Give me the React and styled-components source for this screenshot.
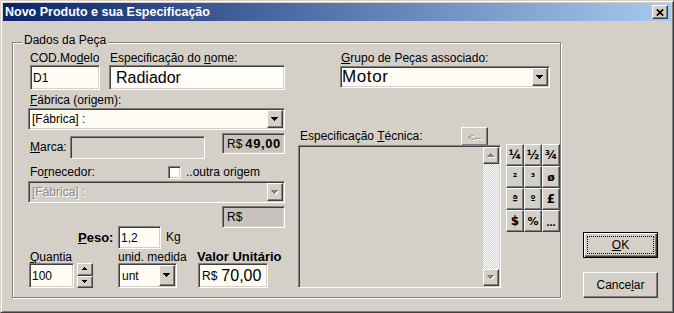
import React from 'react';
import styled, { createGlobalStyle, css } from 'styled-components';

const GlobalStyle = createGlobalStyle`
  html, body {
    margin: 0;
    padding: 0;
    background: #d4d0c8;
  }

  body {
    font-family: "Liberation Sans", Arial, sans-serif;
    font-size: 12px;
    color: #000;
  }

  u {
    text-decoration-thickness: 1px;
    text-underline-offset: 1px;
  }
`;

// bordas 3D do tema clássico
const raised = css`
  border: 1px solid;
  border-color: #fff #404040 #404040 #fff;
  box-shadow: inset -1px -1px 0 #808080;
  background: #d4d0c8;
`;

const sunken = css`
  border: 1px solid;
  border-color: #808080 #fff #fff #808080;
  box-shadow: inset 1px 1px 0 #404040, inset -1px -1px 0 #d4d0c8;
`;

const tones = {
  edit: '#fffcf4',
  white: '#fffefb',
  disabled: '#d4d0c8',
  price: '#c6c3be',
};

const Window = styled.div`
  box-sizing: border-box;
  width: 674px;
  height: 313px;
  padding: 2px;
  border: 1px solid;
  border-color: #d4d0c8 #404040 #404040 #d4d0c8;
  box-shadow: inset 1px 1px 0 #fff, inset -1px -1px 0 #808080;
  background: #d4d0c8;
  display: flex;
  flex-direction: column;
  overflow: hidden;
`;

const TitleBar = styled.div`
  height: 18px;
  display: flex;
  align-items: center;
  padding: 0 3px 0 2px;
  background: linear-gradient(to right, #0a246a, #a6caf0);
`;

const TitleText = styled.span`
  flex: 1;
  color: #fff;
  font-size: 12.5px;
  font-weight: 700;
  white-space: nowrap;
`;

const CloseButton = styled.button`
  ${raised};
  box-sizing: border-box;
  width: 16px;
  height: 14px;
  padding: 0;
  display: flex;
  align-items: center;
  justify-content: center;
`;

const Body = styled.div`
  display: flex;
  align-items: flex-start;
  padding: 21px 0 0 9px;
`;

const GroupBox = styled.section`
  box-sizing: border-box;
  width: 549px;
  height: 256px;
  border: 1px solid #808080;
  box-shadow: inset 1px 1px 0 #fff, 1px 1px 0 #fff;
  display: flex;
  flex-direction: column;
`;

const GroupTitle = styled.h2`
  align-self: flex-start;
  margin: -10px 0 0 9px;
  padding: 0 2px;
  background: #d4d0c8;
  font-size: 12px;
  font-weight: 400;
  line-height: 14px;
`;

const Columns = styled.div`
  display: flex;
  padding-top: 5px;
`;

const LeftCol = styled.div`
  width: 257px;
  margin-left: 15px;
  display: flex;
  flex-direction: column;
`;

const RightCol = styled.div`
  width: 263px;
  margin-left: 12px;
  display: flex;
  flex-direction: column;
`;

const TopGrid = styled.div`
  display: grid;
  grid-template-columns: 81px auto;
`;

const BottomGrid = styled.div`
  display: grid;
  grid-template-columns: 89px 79px auto;
  margin-top: 2px;
  padding-left: 1px;
`;

const Stack = styled.div`
  display: flex;
  flex-direction: column;
  align-items: flex-start;
  margin-left: ${p => p.$x || 0}px;
  margin-top: ${p => p.$mt || 0}px;
  gap: ${p => p.$gap || 0}px;
`;

const Row = styled.div`
  display: flex;
  align-items: ${p => p.$align || 'center'};
  margin-top: ${p => p.$mt || 0}px;
  padding-left: ${p => p.$pl || 0}px;
  height: ${p => (p.$h ? `${p.$h}px` : 'auto')};
`;

const Caption = styled.label`
  display: block;
  flex: none;
  width: ${p => (p.$w ? `${p.$w}px` : 'auto')};
  padding-left: ${p => p.$indent || 0}px;
  font-size: ${p => (p.$bold ? 13 : 12)}px;
  font-weight: ${p => (p.$bold ? 700 : 400)};
  line-height: ${p => p.$lh || 13}px;
  text-align: ${p => p.$align || 'left'};
  white-space: nowrap;
`;

const Field = styled.div`
  ${sunken};
  box-sizing: border-box;
  flex: none;
  width: ${p => p.$w}px;
  height: ${p => p.$h}px;
  margin-left: ${p => p.$x || 0}px;
  padding-left: ${p => p.$pad ?? 2}px;
  display: flex;
  align-items: center;
  gap: 4px;
  background: ${p => tones[p.$tone || 'edit']};
  font-size: ${p => p.$size || 12}px;
  white-space: nowrap;
  overflow: hidden;
`;

const PriceField = styled(Field)`
  margin-left: auto;
  gap: 3px;
`;

const PriceBox = styled(Field)`
  align-self: flex-end;
`;

const Amount = styled.span`
  font-size: ${p => p.$size}px;
  font-weight: ${p => (p.$bold ? 700 : 400)};
  letter-spacing: ${p => (p.$bold ? 0.6 : 0)}px;
`;

const Combo = styled.div`
  ${sunken};
  box-sizing: border-box;
  flex: none;
  width: ${p => p.$w}px;
  height: ${p => p.$h || 22}px;
  margin-top: ${p => p.$mt || 0}px;
  padding: 1px;
  display: flex;
  background: ${p => (p.$disabled ? '#d4d0c8' : '#fffcf4')};
`;

const ComboValue = styled.span`
  flex: 1;
  display: flex;
  align-items: center;
  padding-left: ${p => p.$pad ?? 2}px;
  font-size: ${p => p.$size || 12}px;
  letter-spacing: ${p => p.$ls || 0}px;
  color: ${p => (p.$disabled ? '#8a8a8a' : '#000')};
  text-shadow: ${p => (p.$disabled ? '1px 1px 0 #fff' : 'none')};
  white-space: nowrap;
  overflow: hidden;
`;

const DropButton = styled.span`
  ${raised};
  box-sizing: border-box;
  width: 16px;
  display: flex;
  align-items: center;
  justify-content: center;
`;

const CheckBox = styled.span`
  ${sunken};
  box-sizing: border-box;
  width: 13px;
  height: 13px;
  background: #fff;
  flex: none;
`;

const Spinner = styled.div`
  display: flex;
  flex-direction: column;
  width: 16px;
  height: 25px;
  margin-left: 3px;
`;

const SpinButton = styled.span`
  ${raised};
  box-sizing: border-box;
  flex: 1;
  display: flex;
  align-items: center;
  justify-content: center;
`;

const SpecRow = styled.div`
  display: flex;
  align-items: flex-start;
  margin-top: 39px;
`;

const SpecBlock = styled.div`
  width: 203px;
  margin-left: 1px;
  display: flex;
  flex-direction: column;
`;

const SpecHeader = styled.div`
  height: 19px;
  display: flex;
  align-items: center;
`;

const SmallButton = styled.button`
  ${raised};
  box-sizing: border-box;
  width: 27px;
  height: 19px;
  margin: 0 13px 0 auto;
  padding: 0;
  font: 11px "Liberation Sans", Arial, sans-serif;
  color: #8a8a8a;
  text-shadow: 1px 1px 0 #fff;
`;

const TextArea = styled.div`
  ${sunken};
  box-sizing: border-box;
  height: 143px;
  margin-top: -1px;
  padding: 1px;
  display: flex;
  justify-content: flex-end;
  background: #d4d0c8;
`;

const ScrollBar = styled.div`
  width: 16px;
  display: flex;
  flex-direction: column;
`;

const ScrollArrow = styled.span`
  ${raised};
  box-sizing: border-box;
  height: 17px;
  display: flex;
  align-items: center;
  justify-content: center;
`;

const ScrollTrack = styled.span`
  flex: 1;
  background: repeating-conic-gradient(#fff 0 25%, #d4d0c8 0 50%) 0 0 / 2px 2px;
`;

const Keypad = styled.div`
  display: grid;
  grid-template-columns: repeat(3, 18px);
  grid-auto-rows: 22px;
  margin: 17px 0 0 5px;
`;

const Key = styled.button`
  ${raised};
  box-sizing: border-box;
  padding: 0;
  font: bold ${p => p.$size || 11}px "DejaVu Sans", "Liberation Sans", sans-serif;
  color: #000;
  display: flex;
  align-items: ${p => (p.$low ? 'flex-end' : 'center')};
  justify-content: center;
  padding-bottom: ${p => (p.$low ? 3 : 0)}px;
`;

const SideCol = styled.div`
  height: 256px;
  margin-left: 22px;
  display: flex;
  flex-direction: column;
  justify-content: flex-end;
  gap: 14px;
`;

const PushButton = styled.button`
  ${raised};
  box-sizing: border-box;
  width: 75px;
  height: 26px;
  padding: 3px;
  display: flex;
  font: 12px "Liberation Sans", Arial, sans-serif;
  color: #000;

  ${p =>
    p.$default &&
    css`
      border: 1px solid #000;
      box-shadow: inset 1px 1px 0 #fff, inset -1px -1px 0 #404040,
        inset -2px -2px 0 #808080;
    `}
`;

const ButtonFace = styled.span`
  flex: 1;
  display: flex;
  align-items: center;
  justify-content: center;
  border: 1px dotted ${p => (p.$focus ? '#000' : 'transparent')};
`;

const Triangle = ({ dir = 'down', disabled, small }) => {
  const d = small
    ? 'M0 0h5v1h-1v1h-1v1h-1v-1h-1v-1h-1z'
    : 'M0 0h7v1h-1v1h-1v1h-1v1h-1v-1h-1v-1h-1v-1h-1z';
  const w = small ? 5 : 7;
  const h = small ? 3 : 4;
  const flip = dir === 'up' ? `rotate(180 ${w / 2} ${h / 2})` : undefined;
  return (
    <svg width={w + 1} height={h + 1} viewBox={`0 0 ${w + 1} ${h + 1}`} shapeRendering="crispEdges">
      {disabled && <path d={d} fill="#fff" transform={`translate(1 1) ${flip || ''}`} />}
      <path d={d} fill={disabled ? '#808080' : '#000'} transform={flip} />
    </svg>
  );
};

const keys = [
  { k: '¼', size: 12 },
  { k: '½', size: 12 },
  { k: '¾', size: 12 },
  { k: '²', size: 10 },
  { k: '³', size: 10 },
  { k: 'ø', size: 11 },
  { k: 'ª', size: 10 },
  { k: 'º', size: 9 },
  { k: '£', size: 12 },
  { k: '$', size: 12 },
  { k: '%', size: 11 },
  { k: '…', size: 9, low: true },
];

const App = () => (
  <>
    <GlobalStyle />
    <Window>
      <TitleBar>
        <TitleText>Novo Produto e sua Especificação</TitleText>
        <CloseButton aria-label="Fechar">
          <svg width="8" height="7" viewBox="0 0 8 7">
            <path d="M0.8 0.3 L7.2 6.7 M7.2 0.3 L0.8 6.7" stroke="#000" strokeWidth="1.7" />
          </svg>
        </CloseButton>
      </TitleBar>

      <Body>
        <GroupBox>
          <GroupTitle>Dados da Peça</GroupTitle>
          <Columns>
            <LeftCol>
              <TopGrid>
                <Stack>
                  <Caption $indent={2}>
                    COD.Mo<u>d</u>elo
                  </Caption>
                  <Field $w={70} $h={25} $x={2}>
                    D1
                  </Field>
                </Stack>
                <Stack>
                  <Caption $indent={1}>
                    Especificação do <u>n</u>ome:
                  </Caption>
                  <Field $w={176} $h={25} $pad={6} $size={16} $tone="white">
                    Radiador
                  </Field>
                </Stack>
              </TopGrid>

              <Stack $mt={4} $gap={1}>
                <Caption $indent={2}>
                  <u>F</u>ábrica (origem):
                </Caption>
                <Combo $w={257}>
                  <ComboValue>[Fábrica] :</ComboValue>
                  <DropButton>
                    <Triangle />
                  </DropButton>
                </Combo>
              </Stack>

              <Row $align="flex-start" $mt={3} $pl={2}>
                <Caption $w={40} $lh={23} style={{ marginTop: 3 }}>
                  <u>M</u>arca:
                </Caption>
                <Field $w={135} $h={23} $tone="disabled" style={{ marginTop: 3 }} />
                <PriceField $w={63} $h={21} $tone="price" $pad={4}>
                  <Amount $size={12}>R$</Amount>
                  <Amount $size={13} $bold>
                    49,00
                  </Amount>
                </PriceField>
              </Row>

              <Row $mt={6} $pl={2} $h={15}>
                <Caption $w={138}>
                  Fo<u>r</u>necedor:
                </Caption>
                <CheckBox />
                <Caption $indent={5}>..outra origem</Caption>
              </Row>

              <Combo $w={257} $mt={1} $disabled>
                <ComboValue $disabled>[Fábrica] :</ComboValue>
                <DropButton>
                  <Triangle disabled />
                </DropButton>
              </Combo>

              <PriceBox $w={63} $h={22} $tone="price" $pad={4} style={{ marginTop: 3 }}>
                R$
              </PriceBox>

              <Row $mt={-2} $pl={50}>
                <Caption $bold $w={35}>
                  <u>P</u>eso:
                </Caption>
                <Field $w={43} $h={23} $x={5} $pad={2}>
                  1,2
                </Field>
                <Caption $indent={5}>Kg</Caption>
              </Row>

              <BottomGrid>
                <Stack>
                  <Caption $indent={1} $lh={12}>
                    <u>Q</u>uantia
                  </Caption>
                  <Row>
                    <Field $w={45} $h={25} $pad={2}>
                      100
                    </Field>
                    <Spinner>
                      <SpinButton>
                        <Triangle dir="up" small />
                      </SpinButton>
                      <SpinButton>
                        <Triangle small />
                      </SpinButton>
                    </Spinner>
                  </Row>
                </Stack>
                <Stack>
                  <Caption $lh={12}>unid. medida</Caption>
                  <Combo $w={59} $h={25}>
                    <ComboValue>unt</ComboValue>
                    <DropButton>
                      <Triangle />
                    </DropButton>
                  </Combo>
                </Stack>
                <Stack>
                  <Caption $bold $lh={12}>
                    Valor Unitário
                  </Caption>
                  <Field $w={70} $h={25} $x={1} $pad={3}>
                    <Amount $size={12}>R$</Amount>
                    <Amount $size={16}>70,00</Amount>
                  </Field>
                </Stack>
              </BottomGrid>
            </LeftCol>

            <RightCol>
              <Stack $x={43}>
                <Caption $indent={1}>
                  <u>G</u>rupo de Peças associado:
                </Caption>
                <Combo $w={210} $mt={1}>
                  <ComboValue $pad={0} $size={17} $ls={0.6}>
                    Motor
                  </ComboValue>
                  <DropButton>
                    <Triangle />
                  </DropButton>
                </Combo>
              </Stack>

              <SpecRow>
                <SpecBlock>
                  <SpecHeader>
                    <Caption $indent={2}>
                      Especificação <u>T</u>écnica:
                    </Caption>
                    <SmallButton>&lt;--</SmallButton>
                  </SpecHeader>
                  <TextArea>
                    <ScrollBar>
                      <ScrollArrow>
                        <Triangle dir="up" disabled />
                      </ScrollArrow>
                      <ScrollTrack />
                      <ScrollArrow>
                        <Triangle disabled />
                      </ScrollArrow>
                    </ScrollBar>
                  </TextArea>
                </SpecBlock>

                <Keypad>
                  {keys.map(({ k, size, low }) => (
                    <Key key={k} $size={size} $low={low}>
                      {k}
                    </Key>
                  ))}
                </Keypad>
              </SpecRow>
            </RightCol>
          </Columns>
        </GroupBox>

        <SideCol>
          <PushButton $default>
            <ButtonFace $focus>
              <u>O</u>K
            </ButtonFace>
          </PushButton>
          <PushButton>
            <ButtonFace>
              Cance<u>l</u>ar
            </ButtonFace>
          </PushButton>
        </SideCol>
      </Body>
    </Window>
  </>
);

export default App;
